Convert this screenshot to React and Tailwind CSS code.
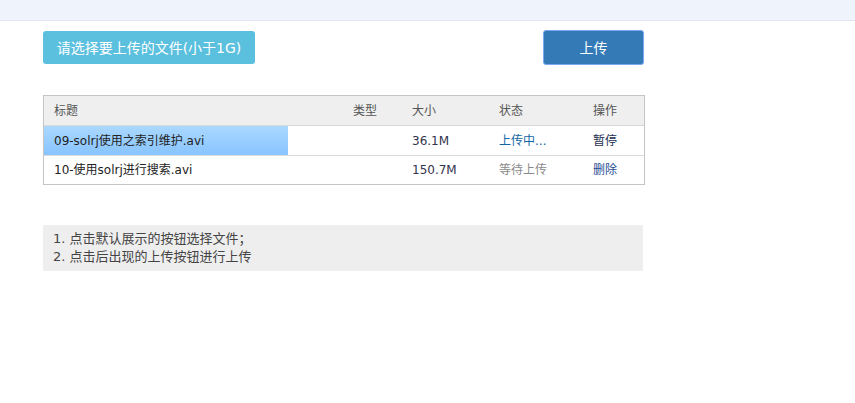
import React from 'react';

const files = [
  { name: '09-solrj使用之索引维护.avi', size: '36.1M', status: '上传中...', op: '暂停', progress: 40.6, active: true },
  { name: '10-使用solrj进行搜索.avi', size: '150.7M', status: '等待上传', op: '删除', progress: 0, active: false },
];

const cols = 'grid grid-cols-[299px_59px_87px_94px_61px]';

export default function App() {
  return (
    <div
      className="w-[855px] h-[403px] bg-white text-[12px] text-[#333]"
      style={{ fontFamily: '"DejaVu Sans", "Noto Sans CJK SC", sans-serif' }}
    >
      {/* top bar */}
      <div className="h-[21px] bg-[#eff3fb] border-b border-[#e2e6ee]" />

      <div className="pl-[43px] w-[645px]">
        {/* buttons */}
        <div className="flex items-start justify-between mt-[9px]">
          <button className="mt-[1px] h-[33px] w-[212px] rounded-[3px] bg-[#5bc0de] text-white text-[14px] leading-none">
            请选择要上传的文件(小于1G)
          </button>
          <button className="mr-[1px] h-[35px] w-[101px] rounded-[3px] bg-[#337ab7] border border-[#7aa7ef] text-white text-[14px] leading-none">
            上传
          </button>
        </div>

        {/* file table */}
        <div className="mt-[30px] w-[602px] border border-[#c4c4c4]">
          <div className={`${cols} h-[30px] items-center bg-[#efefef] border-b border-[#d8d8d8] text-[#555]`}>
            <div className="pl-[10px]">标题</div>
            <div className="pl-[10px]">类型</div>
            <div className="pl-[10px]">大小</div>
            <div className="pl-[10px]">状态</div>
            <div className="pl-[10px]">操作</div>
          </div>
          {files.map((f, i) => (
            <div
              key={f.name}
              className={`relative h-[29px] ${i > 0 ? 'border-t border-[#dcdcdc]' : ''}`}
            >
              {f.progress > 0 && (
                <div
                  className="absolute left-0 top-0 bottom-0 bg-gradient-to-b from-[#aad8ff] to-[#88c4ff]"
                  style={{ width: `${f.progress}%` }}
                />
              )}
              <div className={`${cols} relative h-full items-center`}>
                <div className="pl-[10px] text-[#222]">{f.name}</div>
                <div className="pl-[10px]" />
                <div className="pl-[10px] text-[#33334d]">{f.size}</div>
                <div className={`pl-[10px] ${f.active ? 'text-[#1266a3]' : 'text-[#8a8a8a]'}`}>{f.status}</div>
                <div className={`pl-[10px] ${f.active ? 'text-[#1c2f52]' : 'text-[#1f4d96]'}`}>{f.op}</div>
              </div>
            </div>
          ))}
        </div>

        {/* notes */}
        <div className="mt-[40px] w-[600px] h-[46px] bg-[#eeeeee] pl-[10px] pt-[5px] text-[13px] text-[#444] leading-[18px]">
          <div>1. 点击默认展示的按钮选择文件；</div>
          <div>2. 点击后出现的上传按钮进行上传</div>
        </div>
      </div>
    </div>
  );
}
